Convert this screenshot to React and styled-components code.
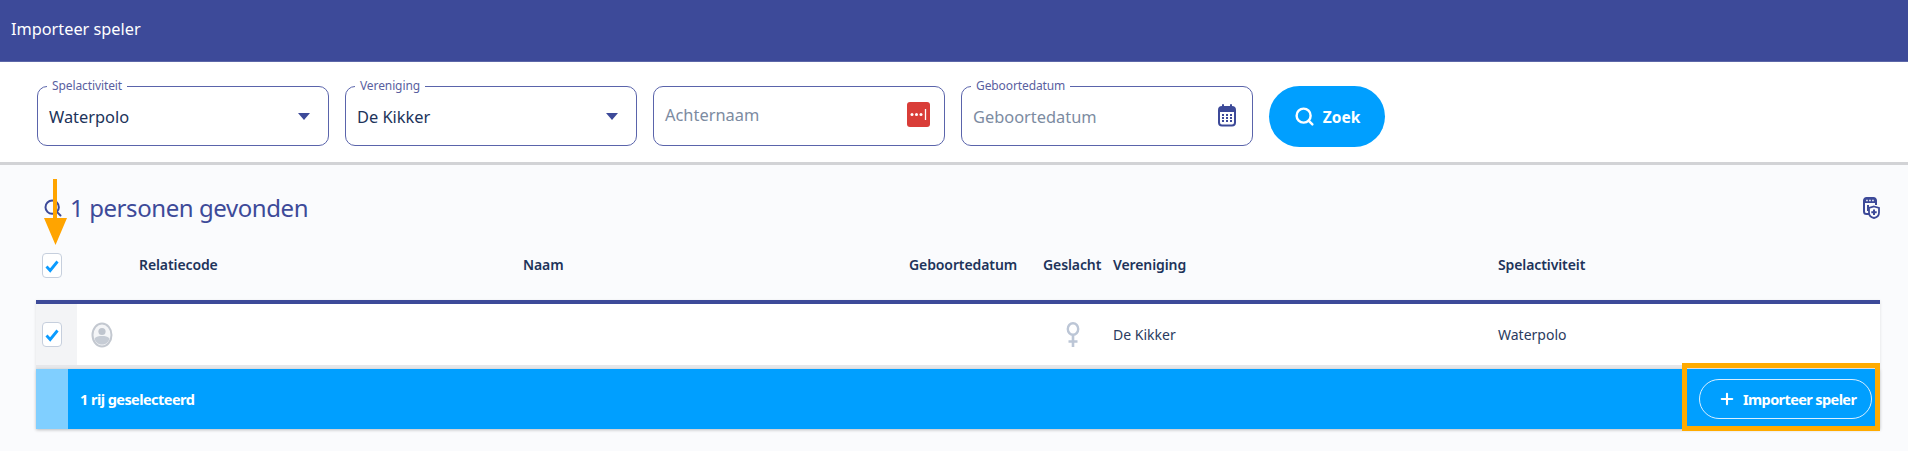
import React from 'react'
import styled, { createGlobalStyle } from 'styled-components'
import { Search, Plus } from 'lucide-react'

const GlobalStyle = createGlobalStyle`
  * { box-sizing: border-box; }
  html, body { margin: 0; padding: 0; background: #fafbfd; }
  body { font-family: "Noto Sans", "Open Sans", sans-serif; color: #1f2f5c; overflow: hidden; }
`

const Page = styled.div`
  position: relative;
  width: 1908px;
  height: 451px;
  background: #fafbfd;
  overflow: hidden;
`
const Header = styled.header`
  height: 62px;
  background: #3d4a99;
  color: #fff;
  display: flex;
  align-items: center;
  padding: 0 0 4px 11px;
  font-size: 16.3px;
  box-shadow: inset 0 -1px 0 #5c67a8;
`
const FilterBar = styled.div`
  height: 103px;
  background: #fff;
  display: flex;
  align-items: flex-start;
  gap: 16px;
  padding: 24px 0 0 37px;
  border-bottom: 3px solid #d2d3d6;
`
const Field = styled.div`
  position: relative;
  width: 292px;
  height: 60px;
  border: 1.7px solid #5a64ab;
  border-radius: 10px;
  background: #fff;
  display: flex;
  align-items: center;
  justify-content: space-between;
  padding: ${p => (p.$top ? '1px 16px 0 11px' : '0 16px 3px 11px')};
`
const Legend = styled.span`
  position: absolute;
  top: -8px;
  left: 9px;
  padding: 0 5px;
  background: #fff;
  font-size: 12px;
  line-height: 14px;
  letter-spacing: -.1px;
  color: #5a5f9f;
`
const Value = styled.span`
  font-size: 16.4px;
  color: ${p => (p.$empty ? '#7c8ba1' : '#20335a')};
`
const Caret = styled.span`
  width: 0;
  height: 0;
  margin-right: 2px;
  border-left: 6px solid transparent;
  border-right: 6px solid transparent;
  border-top: 7px solid #3d4a99;
`
const KeyBadge = styled.span`
  width: 23px;
  height: 25px;
  margin-right: -2px;
  border-radius: 3px;
  background: #d93d38;
  color: #fff;
  display: flex;
  align-items: center;
  justify-content: center;
`
const SearchButton = styled.button`
  width: 116px;
  height: 61px;
  border: 0;
  border-radius: 31px;
  background: #009fff;
  color: #fff;
  display: flex;
  align-items: center;
  justify-content: center;
  gap: 8px;
  font: 700 15.5px "Noto Sans", sans-serif;
`
const Main = styled.main`
  padding: 25px 28px 0 36px;
`
const TitleRow = styled.div`
  height: 36px;
  display: flex;
  align-items: center;
  justify-content: space-between;
  padding-left: 7px;
`
const TitleGroup = styled.div`
  display: flex;
  align-items: center;
  gap: 7px;
  color: #3d4a99;
`
const Title = styled.h2`
  margin: 0;
  font-size: 24px;
  font-weight: 400;
  line-height: 36px;
  letter-spacing: -.42px;
`
const Grid = styled.div`
  display: grid;
  grid-template-columns: 41px 62px 384px 386px 134px 70px 385px 382px;
  align-items: center;
`
const HeadRow = styled(Grid)`
  height: 60px;
  margin-top: 14px;
  padding-bottom: 12px;
  font-size: 14px;
  font-weight: 600;
  letter-spacing: -.1px;
  color: #20335a;
  white-space: nowrap;
`
const Row = styled(Grid)`
  height: 69px;
  background: #fff;
  border-top: 4px solid #3d4a99;
  border-bottom: 4px solid #e6e7ea;
  font-size: 14px;
  color: #2a3b60;
  box-shadow: 0 1px 3px rgba(0, 0, 0, .12);
`
const CheckCell = styled.div`
  height: 100%;
  display: flex;
  align-items: center;
  padding-left: 6px;
  padding-top: ${p => (p.$shaded ? '0' : '3px')};
  background: ${p => (p.$shaded ? '#f3f4f6' : 'transparent')};
`
const Box = styled.span`
  width: 20px;
  height: 25px;
  border: 1.5px solid #c6cfdd;
  border-radius: 4px;
  background: #fff;
  display: flex;
  align-items: center;
  justify-content: center;
`
const AvatarCell = styled.div`
  padding-left: 14px;
  display: flex;
`
const GenderCell = styled.div`
  padding-left: 23px;
  display: flex;
`
const SelectionBar = styled.div`
  position: relative;
  height: 60px;
  background: #009fff;
  display: flex;
  align-items: center;
  justify-content: space-between;
  padding-right: 8px;
  box-shadow: 0 1px 3px rgba(0, 0, 0, .25);
`
const BarInfo = styled.div`
  height: 100%;
  display: flex;
  align-items: center;
  gap: 12px;
  color: #fff;
  font-size: 14.5px;
  font-weight: 700;
  letter-spacing: -.55px;
  &::before {
    content: "";
    width: 32px;
    height: 100%;
    background: #80cfff;
  }
`
const ImportButton = styled.button`
  width: 173px;
  height: 40px;
  border: 1.5px solid #d8efff;
  border-radius: 20px;
  background: transparent;
  color: #fff;
  display: flex;
  align-items: center;
  gap: 7px;
  padding: 0 0 0 18px;
  font: 700 14.5px "Noto Sans", sans-serif;
  letter-spacing: -.6px;
  white-space: nowrap;
`
const Highlight = styled.span`
  position: absolute;
  top: -6px;
  right: 0;
  bottom: -2px;
  width: 198px;
  border: 5px solid #ffab00;
  pointer-events: none;
`
const ArrowMark = styled.svg`
  position: absolute;
  left: 44px;
  top: 179px;
`
const CalendarSvg = styled.svg`
  margin-top: -3px;
`

const Check = () => (
  <svg width="14" height="14" viewBox="0 0 14 14">
    <path d="M1.5 7.5 5.2 11.5 12.5 2.5" fill="none" stroke="#0a9bff" strokeWidth="2.8" />
  </svg>
)

const Avatar = () => (
  <svg width="22" height="26" viewBox="0 0 22 26">
    <ellipse cx="11" cy="13" rx="9.5" ry="11.5" fill="#f4f5f7" stroke="#c3c8d0" strokeWidth="2" />
    <circle cx="11" cy="9.5" r="3.6" fill="#bfc5ce" />
    <path d="M3.5 16.5C5 14.5 8 14 11 14s6 .5 7.5 2.5C17.5 20.5 14.5 22.5 11 22.5S4.5 20.5 3.5 16.5z" fill="#c6ccd5" />
  </svg>
)

const FemaleIcon = () => (
  <svg width="14" height="25" viewBox="0 0 14 25">
    <ellipse cx="7" cy="7" rx="5.2" ry="5.8" fill="none" stroke="#bcc6d6" strokeWidth="2.4" />
    <path d="M7 13v12M2.5 19.5h9" stroke="#bcc6d6" strokeWidth="2.6" />
  </svg>
)

const CalendarIcon = () => (
  <CalendarSvg width="18" height="23" viewBox="0 0 18 23">
    <path d="M5 1v4M13 1v4" stroke="#3d4a99" strokeWidth="2" strokeLinecap="round" />
    <rect x="1" y="3" width="16" height="18.5" rx="3" fill="#fff" stroke="#3d4a99" strokeWidth="2" />
    <path d="M1 4.5a2 2 0 0 1 2-1h12a2 2 0 0 1 2 1V8H1z" fill="#3d4a99" />
    <path d="M4 11h2M8 11h2M12 11h2M4 14h2M8 14h2M12 14h2M4 17h2M8 17h2M12 17h2" stroke="#3d4a99" strokeWidth="1.8" />
  </CalendarSvg>
)

const ColumnsIcon = () => (
  <svg width="17" height="22" viewBox="0 0 17 22">
    <path d="M9 17H3.5A2.5 2.5 0 0 1 1 14.500v-11A2.500 2.500 0 0 1 3.500 1h7A2.500 2.500 0 0 1 13 3.500V8" fill="none" stroke="#3d4a99" strokeWidth="2" />
    <path d="M1 3.500A2.500 2.500 0 0 1 3.500 1h7A2.500 2.500 0 0 1 13 3.500V6H1z" fill="#3d4a99" />
    <path d="M3.200 3.500h1.500M6.200 3.500h1.500M9.200 3.500h1.500" stroke="#fff" strokeWidth="1.6" />
    <path d="M5 8v6" stroke="#3d4a99" strokeWidth="2" />
    <path d="M11 9.500l5 1.500v4.500c0 3-2.200 5-5 5.500-2.800-.5-5-2.500-5-5.500V11z" fill="#fff" stroke="#3d4a99" strokeWidth="1.800" />
    <path d="M11 12.500v5.500M8.300 15.300h5.400" stroke="#3d4a99" strokeWidth="2" />
  </svg>
)

const KeyDots = () => (
  <svg width="17" height="11" viewBox="0 0 17 11">
    <circle cx="2" cy="5.5" r="1.5" fill="#fff" />
    <circle cx="6.5" cy="5.5" r="1.5" fill="#fff" />
    <circle cx="11" cy="5.5" r="1.5" fill="#fff" />
    <path d="M15.5 0v11" stroke="#fff" strokeWidth="1.3" />
  </svg>
)

export default function App() {
  return (
    <Page>
      <GlobalStyle />
      <Header>Importeer speler</Header>

      <FilterBar>
        <Field $top>
          <Legend>Spelactiviteit</Legend>
          <Value>Waterpolo</Value>
          <Caret />
        </Field>
        <Field $top>
          <Legend>Vereniging</Legend>
          <Value>De Kikker</Value>
          <Caret />
        </Field>
        <Field>
          <Value $empty>Achternaam</Value>
          <KeyBadge><KeyDots /></KeyBadge>
        </Field>
        <Field $top>
          <Legend>Geboortedatum</Legend>
          <Value $empty>Geboortedatum</Value>
          <CalendarIcon />
        </Field>
        <SearchButton>
          <Search size={21} strokeWidth={2.8} />
          Zoek
        </SearchButton>
      </FilterBar>

      <Main>
        <TitleRow>
          <TitleGroup>
            <Search size={20} strokeWidth={2.4} />
            <Title>1 personen gevonden</Title>
          </TitleGroup>
          <ColumnsIcon />
        </TitleRow>

        <HeadRow>
          <CheckCell><Box><Check /></Box></CheckCell>
          <span />
          <span>Relatiecode</span>
          <span>Naam</span>
          <span>Geboortedatum</span>
          <span>Geslacht</span>
          <span>Vereniging</span>
          <span>Spelactiviteit</span>
        </HeadRow>

        <Row>
          <CheckCell $shaded><Box><Check /></Box></CheckCell>
          <AvatarCell><Avatar /></AvatarCell>
          <span />
          <span />
          <span />
          <GenderCell><FemaleIcon /></GenderCell>
          <span>De Kikker</span>
          <span>Waterpolo</span>
        </Row>

        <SelectionBar>
          <BarInfo>1 rij geselecteerd</BarInfo>
          <ImportButton>
            <Plus size={18} strokeWidth={2.8} />
            Importeer speler
          </ImportButton>
          <Highlight />
        </SelectionBar>
      </Main>

      <ArrowMark width="24" height="67" viewBox="0 0 24 67">
        <path d="M9 0h4v39h10L11.5 66 0 39h9z" fill="#ffa400" />
      </ArrowMark>
    </Page>
  )
}
